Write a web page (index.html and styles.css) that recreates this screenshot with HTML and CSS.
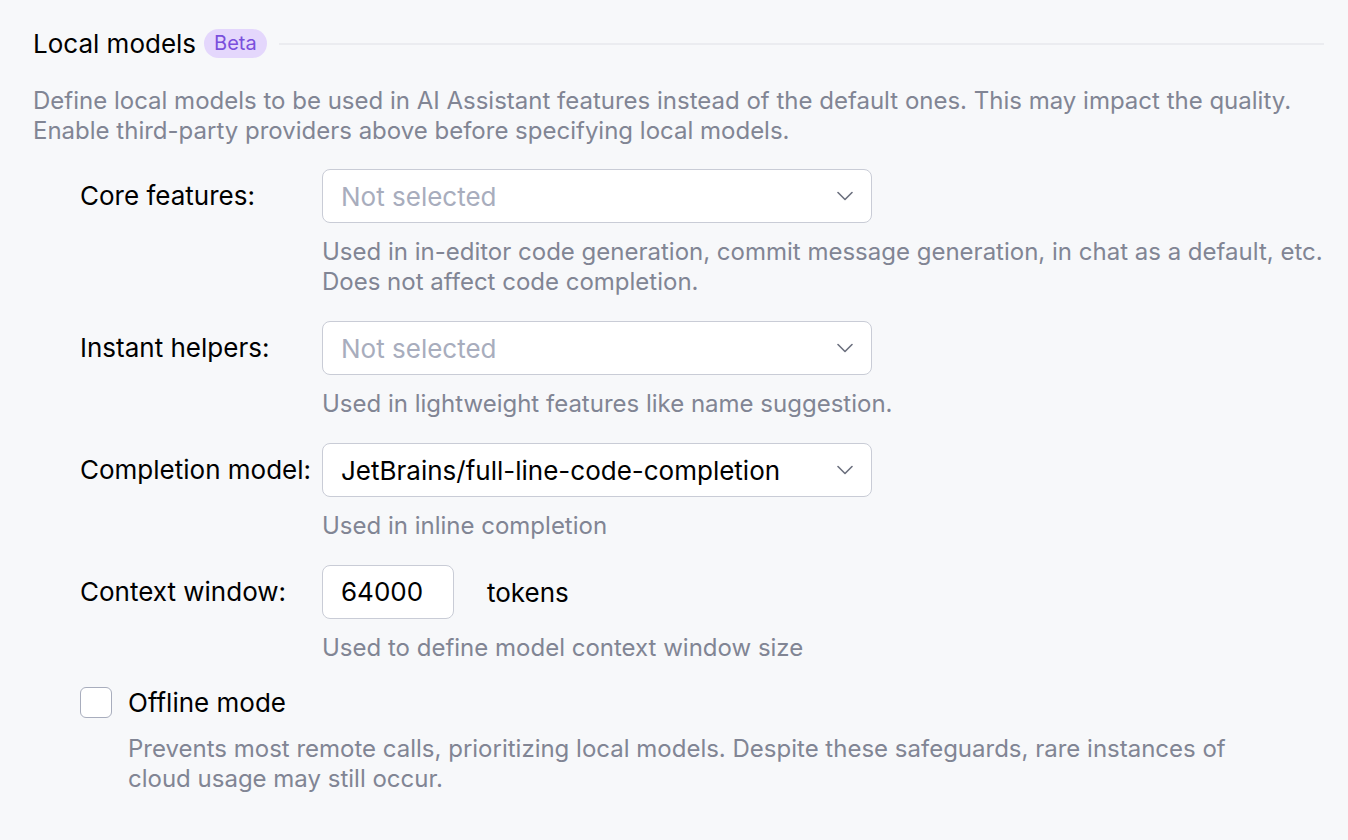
FILE: index.html
```html
<!DOCTYPE html>
<html>
<head>
<meta charset="utf-8">
<link rel="stylesheet" href="styles.css">
</head>
<body>
<main class="page">
  <div class="section-head">
    <span class="title">Local models</span>
    <span class="badge">Beta</span>
    <span class="rule"></span>
  </div>
  <p class="desc">Define local models to be used in AI Assistant features instead of the default ones. This may impact the quality.<br>Enable third-party providers above before specifying local models.</p>

  <div class="form">
    <div class="row">
      <div class="label">Core features:</div>
      <div class="field">
        <div class="select placeholder"><span>Not selected</span>
          <svg class="chev" width="16" height="16" viewBox="0 0 16 16"><path d="M1 4.5l7 7 7-7" fill="none" stroke="#6c707e" stroke-width="1.6" stroke-linecap="round" stroke-linejoin="round"/></svg>
        </div>
        <p class="help">Used in in-editor code generation, commit message generation, in chat as a default, etc.<br>Does not affect code completion.</p>
      </div>
    </div>

    <div class="row">
      <div class="label">Instant helpers:</div>
      <div class="field">
        <div class="select placeholder"><span>Not selected</span>
          <svg class="chev" width="16" height="16" viewBox="0 0 16 16"><path d="M1 4.5l7 7 7-7" fill="none" stroke="#6c707e" stroke-width="1.6" stroke-linecap="round" stroke-linejoin="round"/></svg>
        </div>
        <p class="help">Used in lightweight features like name suggestion.</p>
      </div>
    </div>

    <div class="row">
      <div class="label">Completion model:</div>
      <div class="field">
        <div class="select"><span>JetBrains/full-line-code-completion</span>
          <svg class="chev" width="16" height="16" viewBox="0 0 16 16"><path d="M1 4.5l7 7 7-7" fill="none" stroke="#6c707e" stroke-width="1.6" stroke-linecap="round" stroke-linejoin="round"/></svg>
        </div>
        <p class="help">Used in inline completion</p>
      </div>
    </div>

    <div class="row">
      <div class="label">Context window:</div>
      <div class="field">
        <div class="inline">
          <div class="input">64000</div>
          <span class="unit">tokens</span>
        </div>
        <p class="help">Used to define model context window size</p>
      </div>
    </div>

    <div class="check-row">
      <span class="checkbox"></span>
      <div class="check-body">
        <div class="check-label">Offline mode</div>
        <p class="help">Prevents most remote calls, prioritizing local models. Despite these safeguards, rare instances of<br>cloud usage may still occur.</p>
      </div>
    </div>
  </div>
</main>
</body>
</html>
```

FILE: styles.css
```css
* { box-sizing: border-box; }
html, body {
  margin: 0;
  padding: 0;
  background: #f7f8fa;
}
body {
  font-family: Inter, "Noto Sans", sans-serif;
  font-size: 26px;
  color: #000;
}
.page {
  padding: 29px 24px 0 33px;
}
.section-head {
  display: flex;
  align-items: center;
  height: 29px;
}
.title {
  font-size: 26px;
  line-height: 29px;
  color: #000;
}
.badge {
  margin-left: 8px;
  height: 29px;
  padding: 0 10px;
  border-radius: 15px;
  background: #e4d7fc;
  color: #7a4fdc;
  font-size: 20px;
  line-height: 29px;
}
.rule {
  flex: 1;
  margin-left: 12px;
  height: 2px;
  background: #ebecf0;
}
.desc {
  margin: 28px 0 0;
  font-size: 24px;
  line-height: 29.5px;
  color: #818594;
}
.form {
  padding-left: 47px;
  margin-top: 24px;
  display: flex;
  flex-direction: column;
  gap: 24px;
}
.row {
  display: flex;
  align-items: flex-start;
}
.label {
  width: 242px;
  flex: none;
  height: 54px;
  line-height: 54px;
  font-size: 26px;
}
.field {
  display: flex;
  flex-direction: column;
}
.select {
  width: 550px;
  height: 54px;
  border: 1.5px solid #c9ccd6;
  border-radius: 8px;
  background: #fff;
  display: flex;
  align-items: center;
  justify-content: space-between;
  padding: 0 18px 0 18px;
  font-size: 26px;
  color: #000;
}
.select.placeholder { color: #a8adbd; }
.chev { flex: none; }
.help {
  margin: 14px 0 0;
  font-size: 24px;
  line-height: 30px;
  color: #818594;
}
.inline {
  display: flex;
  align-items: center;
}
.input {
  width: 132px;
  height: 54px;
  border: 1.5px solid #c9ccd6;
  border-radius: 8px;
  background: #fff;
  padding: 0 18px;
  line-height: 51px;
  font-size: 26px;
}
.unit {
  margin-left: 33px;
  font-size: 26px;
}
.check-row {
  display: flex;
  align-items: flex-start;
}
.checkbox {
  width: 32px;
  height: 31px;
  border: 1.5px solid #a8adbd;
  border-radius: 6px;
  background: #fff;
  flex: none;
}
.check-body {
  margin-left: 16px;
}
.check-label {
  height: 32px;
  line-height: 32px;
  font-size: 26px;
}
.check-body .help {
  margin-top: 15px;
}
```
